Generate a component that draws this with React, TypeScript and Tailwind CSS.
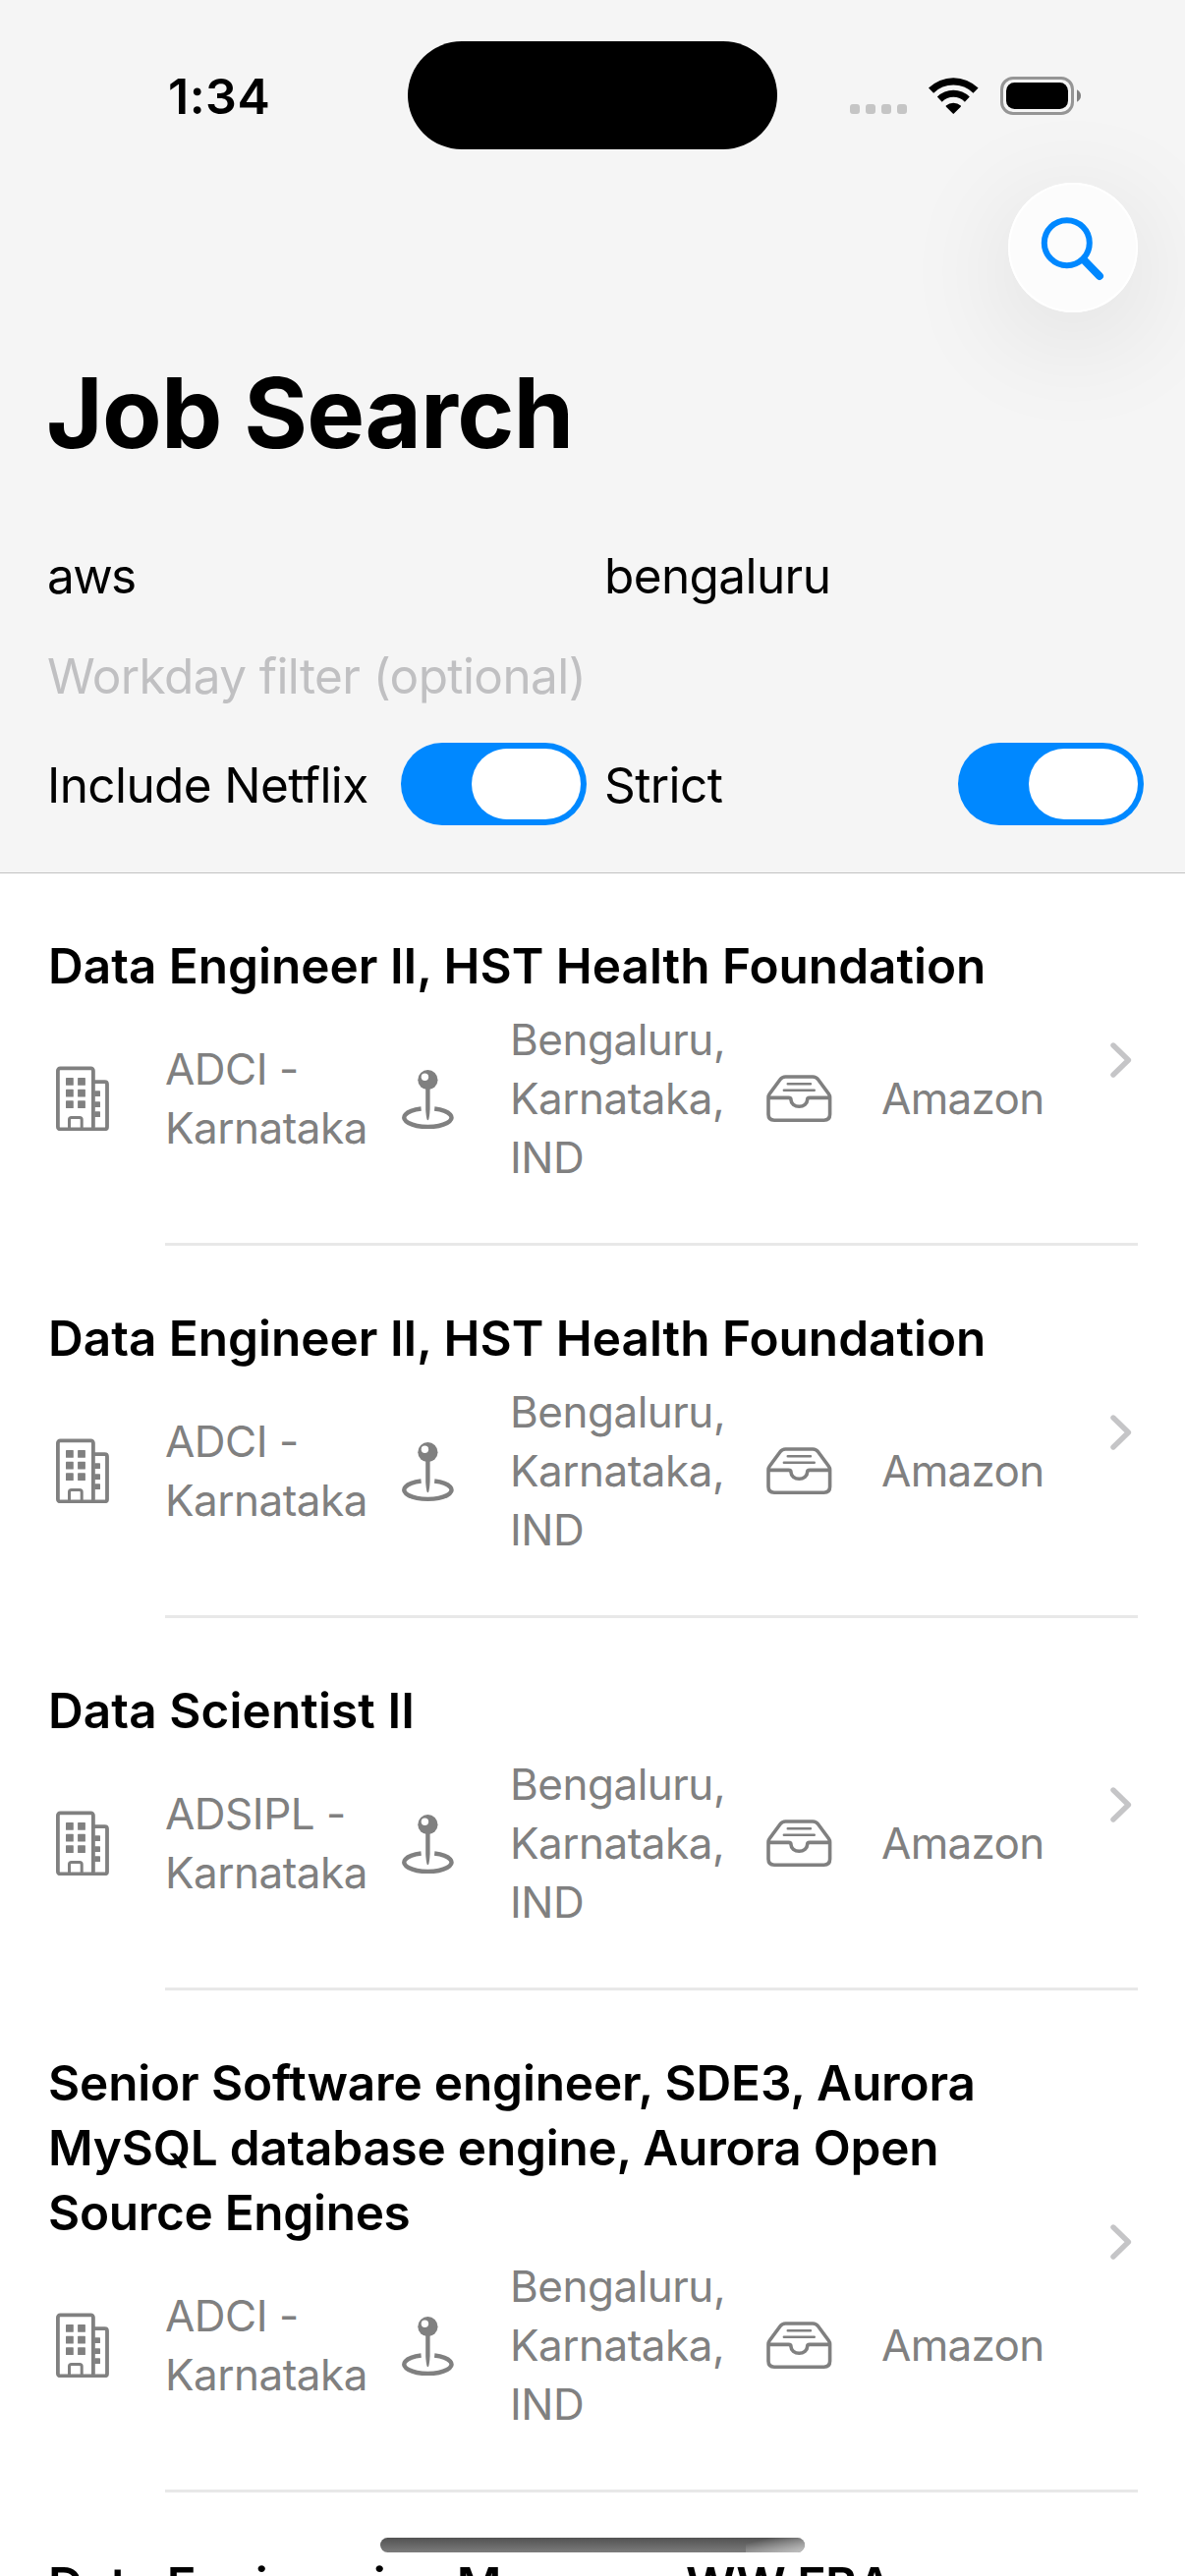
import React from "react";

type Job = { title: { text: string; tracking: string }[]; company: string };

const jobs: Job[] = [
  { title: [{ text: "Data Engineer II, HST Health Foundation", tracking: "tracking-normal" }], company: "ADCI -" },
  { title: [{ text: "Data Engineer II, HST Health Foundation", tracking: "tracking-normal" }], company: "ADCI -" },
  { title: [{ text: "Data Scientist II", tracking: "tracking-[0.1px]" }], company: "ADSIPL -" },
  {
    title: [
      { text: "Senior Software engineer, SDE3, Aurora", tracking: "tracking-[-0.15px]" },
      { text: "MySQL database engine, Aurora Open", tracking: "tracking-[-0.23px]" },
      { text: "Source Engines", tracking: "tracking-[-0.3px]" },
    ],
    company: "ADCI -",
  },
];

function WifiIcon() {
  return (
    <svg width="51" height="37" viewBox="0 0 51 37" className="block">
      <path d="M0 10.6A36 36 0 0 1 50.6 10.6L45.5 15.8A28.5 28.5 0 0 0 5.1 15.8Z" />
      <path d="M8.8 19.4A23.5 23.5 0 0 1 41.8 19.4L36.9 24.7A16.2 16.2 0 0 0 13.7 24.7Z" />
      <path d="M17.8 28.6A11 11 0 0 1 32.8 28.6Q33.2 29.2 32.7 29.7L25.9 36.6Q25.3 37.2 24.7 36.6L17.9 29.7Q17.4 29.2 17.8 28.6Z" />
    </svg>
  );
}

function BatteryIcon() {
  return (
    <svg width="82" height="39" viewBox="0 0 82 39" className="block">
      <rect x="1.5" y="1.5" width="72" height="36" rx="11.5" fill="none" stroke="#959595" strokeWidth="3" />
      <rect x="6" y="6" width="63" height="27" rx="8.5" />
      <path d="M78 13.2Q82 15.4 82 19.5T78 25.8Z" fill="#808080" />
    </svg>
  );
}

function SearchIcon() {
  return (
    <svg width="132" height="132" viewBox="0 0 132 132" fill="none" stroke="#0088ff" className="block">
      <circle cx="59.8" cy="61.2" r="23" strokeWidth="6" />
      <path d="M77 78.5L93 95" strokeWidth="8" strokeLinecap="round" />
    </svg>
  );
}

function BuildingIcon() {
  return (
    <svg width="55" height="66" viewBox="0 0 55 66" className="block text-[#808080]">
      <g fill="none" stroke="currentColor" strokeWidth="3.8">
        <rect x="1.9" y="2.3" width="36" height="62" rx="2.4" />
        <path d="M38 16.2H49.6Q52 16.2 52 18.6V61.9Q52 64.3 49.6 64.3H36" />
        <path d="M13.5 64V54.6Q13.5 52.4 15.7 52.4H24Q26.2 52.4 26.2 54.6V64" strokeWidth="3" />
      </g>
      <g fill="currentColor">
        {[12, 23.8, 35.3].map((y) => (
          <React.Fragment key={y}>
            <rect x="10" y={y} width="7.8" height="7.8" rx="0.6" />
            <rect x="22.1" y={y} width="7.8" height="7.8" rx="0.6" />
          </React.Fragment>
        ))}
        {[25.3, 36.2, 46.3].map((y) => (
          <rect key={y} x="39.2" y={y} width="5.8" height="5.8" rx="0.6" />
        ))}
      </g>
    </svg>
  );
}

function PinIcon() {
  return (
    <svg width="53" height="62" viewBox="0 0 53 62" className="block text-[#808080]">
      <path d="M19.6 39.5A24.1 9.4 0 1 0 33.2 39.5" fill="none" stroke="currentColor" strokeWidth="4.4" />
      <path d="M24.2 18H28.6V40Q28.2 47.5 27.2 50.4Q26.4 52 25.6 50.4Q24.6 47.5 24.2 40Z" fill="currentColor" />
      <circle cx="26.4" cy="10.2" r="10.1" fill="currentColor" />
      <circle cx="23.4" cy="7.3" r="3.7" fill="#fff" />
    </svg>
  );
}

function TrayIcon() {
  return (
    <svg width="67" height="48" viewBox="0 0 67 48" fill="none" stroke="currentColor" strokeLinecap="round" strokeLinejoin="round" className="block text-[#808080]">
      <path
        strokeWidth="3.6"
        d="M2 23V40.3Q2 46.2 8 46.2H58.6Q64.6 46.2 64.6 40.3V23Q64.6 21 63.3 19.2L52.6 4.8Q50.6 2 47.2 2H19.4Q16 2 14 4.8L3.3 19.2Q2 21 2 23ZM2.4 23.4H22.6Q25 23.4 25 25.6A8.3 6.7 0 0 0 41.6 25.6Q41.6 23.4 44 23.4H64.2"
      />
      <path strokeWidth="2.4" d="M21.7 9.2H45M17.8 15.8H48.8" />
    </svg>
  );
}

function ChevronIcon() {
  return (
    <svg width="22" height="36" viewBox="0 0 22 36" fill="none" className="block">
      <path d="M3 3L18.4 18L3 33" stroke="#c5c5c7" strokeWidth="5.4" strokeLinecap="round" strokeLinejoin="round" />
    </svg>
  );
}

function Toggle() {
  return (
    <div className="flex h-[84px] w-[189px] shrink-0 items-center justify-end rounded-full bg-[#0088ff] px-1.5">
      <div className="h-[72px] w-[111px] rounded-full bg-white" />
    </div>
  );
}

function StatusBar() {
  return (
    <div className="flex h-[186px] items-start pt-[42px]">
      <div className="w-[415px] pt-[26px] pl-[171px] text-[50px] leading-[60px] font-semibold tracking-[0.5px]">1:34</div>
      <div className="h-[110px] w-[376px] rounded-full bg-black" />
      <div className="flex items-start pt-9 pl-[74px]">
        <div className="mt-7 flex gap-1.5">
          {[0, 1, 2, 3].map((i) => (
            <span key={i} className="size-2.5 rounded-[3px] bg-[#c5c5c5]" />
          ))}
        </div>
        <div className="mt-px ml-[22px]">
          <WifiIcon />
        </div>
        <div className="ml-[22px]">
          <BatteryIcon />
        </div>
      </div>
    </div>
  );
}

function JobRow({ job }: { job: Job }) {
  return (
    <article className="pt-[61px]">
      <div className="flex items-center">
        <div className="w-[1130px] shrink-0">
          <h2 className="pl-[49px] text-[49.5px] leading-[66px] font-semibold">
            {job.title.map((line) => (
              <span key={line.text} className={`block whitespace-nowrap ${line.tracking}`}>{line.text}</span>
            ))}
          </h2>
          <div className="mt-3 flex h-[180px] items-center text-[44px] leading-[60px] tracking-[-0.5px] whitespace-nowrap text-[#808080]">
            <div className="w-[168px] pl-[57px]">
              <BuildingIcon />
            </div>
            <p className="w-[241px]">
              {job.company}
              <br />
              Karnataka
            </p>
            <div className="w-[110px] pt-1">
              <PinIcon />
            </div>
            <p className="w-[261px]">
              Bengaluru,
              <br />
              Karnataka,
              <br />
              IND
            </p>
            <div className="w-[117px]">
              <TrayIcon />
            </div>
            <p className="tracking-[-0.7px]">Amazon</p>
          </div>
        </div>
        <ChevronIcon />
      </div>
      <div className="mt-[57px] mr-12 ml-[168px] h-[3px] bg-[#e8e8e8]" />
    </article>
  );
}

export default function App() {
  return (
    <div className="relative h-[2622px] w-[1206px] overflow-hidden bg-white font-[Inter,sans-serif] text-black">
      <header className="h-[889px] overflow-hidden border-b border-[#c2c2c2] bg-[#f5f5f5]">
        <StatusBar />
        <div className="flex justify-end pr-12">
          <button className="relative size-[132px] rounded-full bg-[#fcfcfc] shadow-[inset_0_0_0_2px_#ffffff,0_24px_120px_rgba(0,0,0,0.11)]">
            <SearchIcon />
          </button>
        </div>
        <h1 className="relative mt-[42px] pl-[47px] text-[99px] leading-[120px] font-bold tracking-[-0.8px]">Job Search</h1>
        <div className="mt-[73px] pl-12 text-[49.5px] leading-[66px] tracking-[-0.6px]">
          <div className="flex">
            <p className="w-[567px] tracking-[-1.6px]">aws</p>
            <p>bengaluru</p>
          </div>
          <p className="mt-9 text-[#c0c0c2]">Workday filter (optional)</p>
          <div className="mt-[35px] flex items-center">
            <span className="w-[360px] pt-0.5 whitespace-nowrap">Include Netflix</span>
            <Toggle />
            <span className="ml-[18px] w-[360px] pt-0.5">Strict</span>
            <Toggle />
          </div>
        </div>
      </header>
      <main>
        {jobs.map((job, i) => (
          <JobRow key={i} job={job} />
        ))}
        <h2 className="pt-[61px] pl-[49px] text-[49.5px] leading-[66px] font-semibold tracking-[-0.4px] whitespace-nowrap">
          Data Engineering Manager, WW FBA
        </h2>
      </main>
      <div className="absolute top-[2583px] left-[387px] h-[15px] w-[432px] overflow-hidden rounded-full bg-linear-to-b from-[#525252] to-[#7c7c7c]">
        <div className="ml-auto h-full w-[60px] bg-linear-to-br from-transparent from-20% to-[#c4c4c4]" />
      </div>
    </div>
  );
}
